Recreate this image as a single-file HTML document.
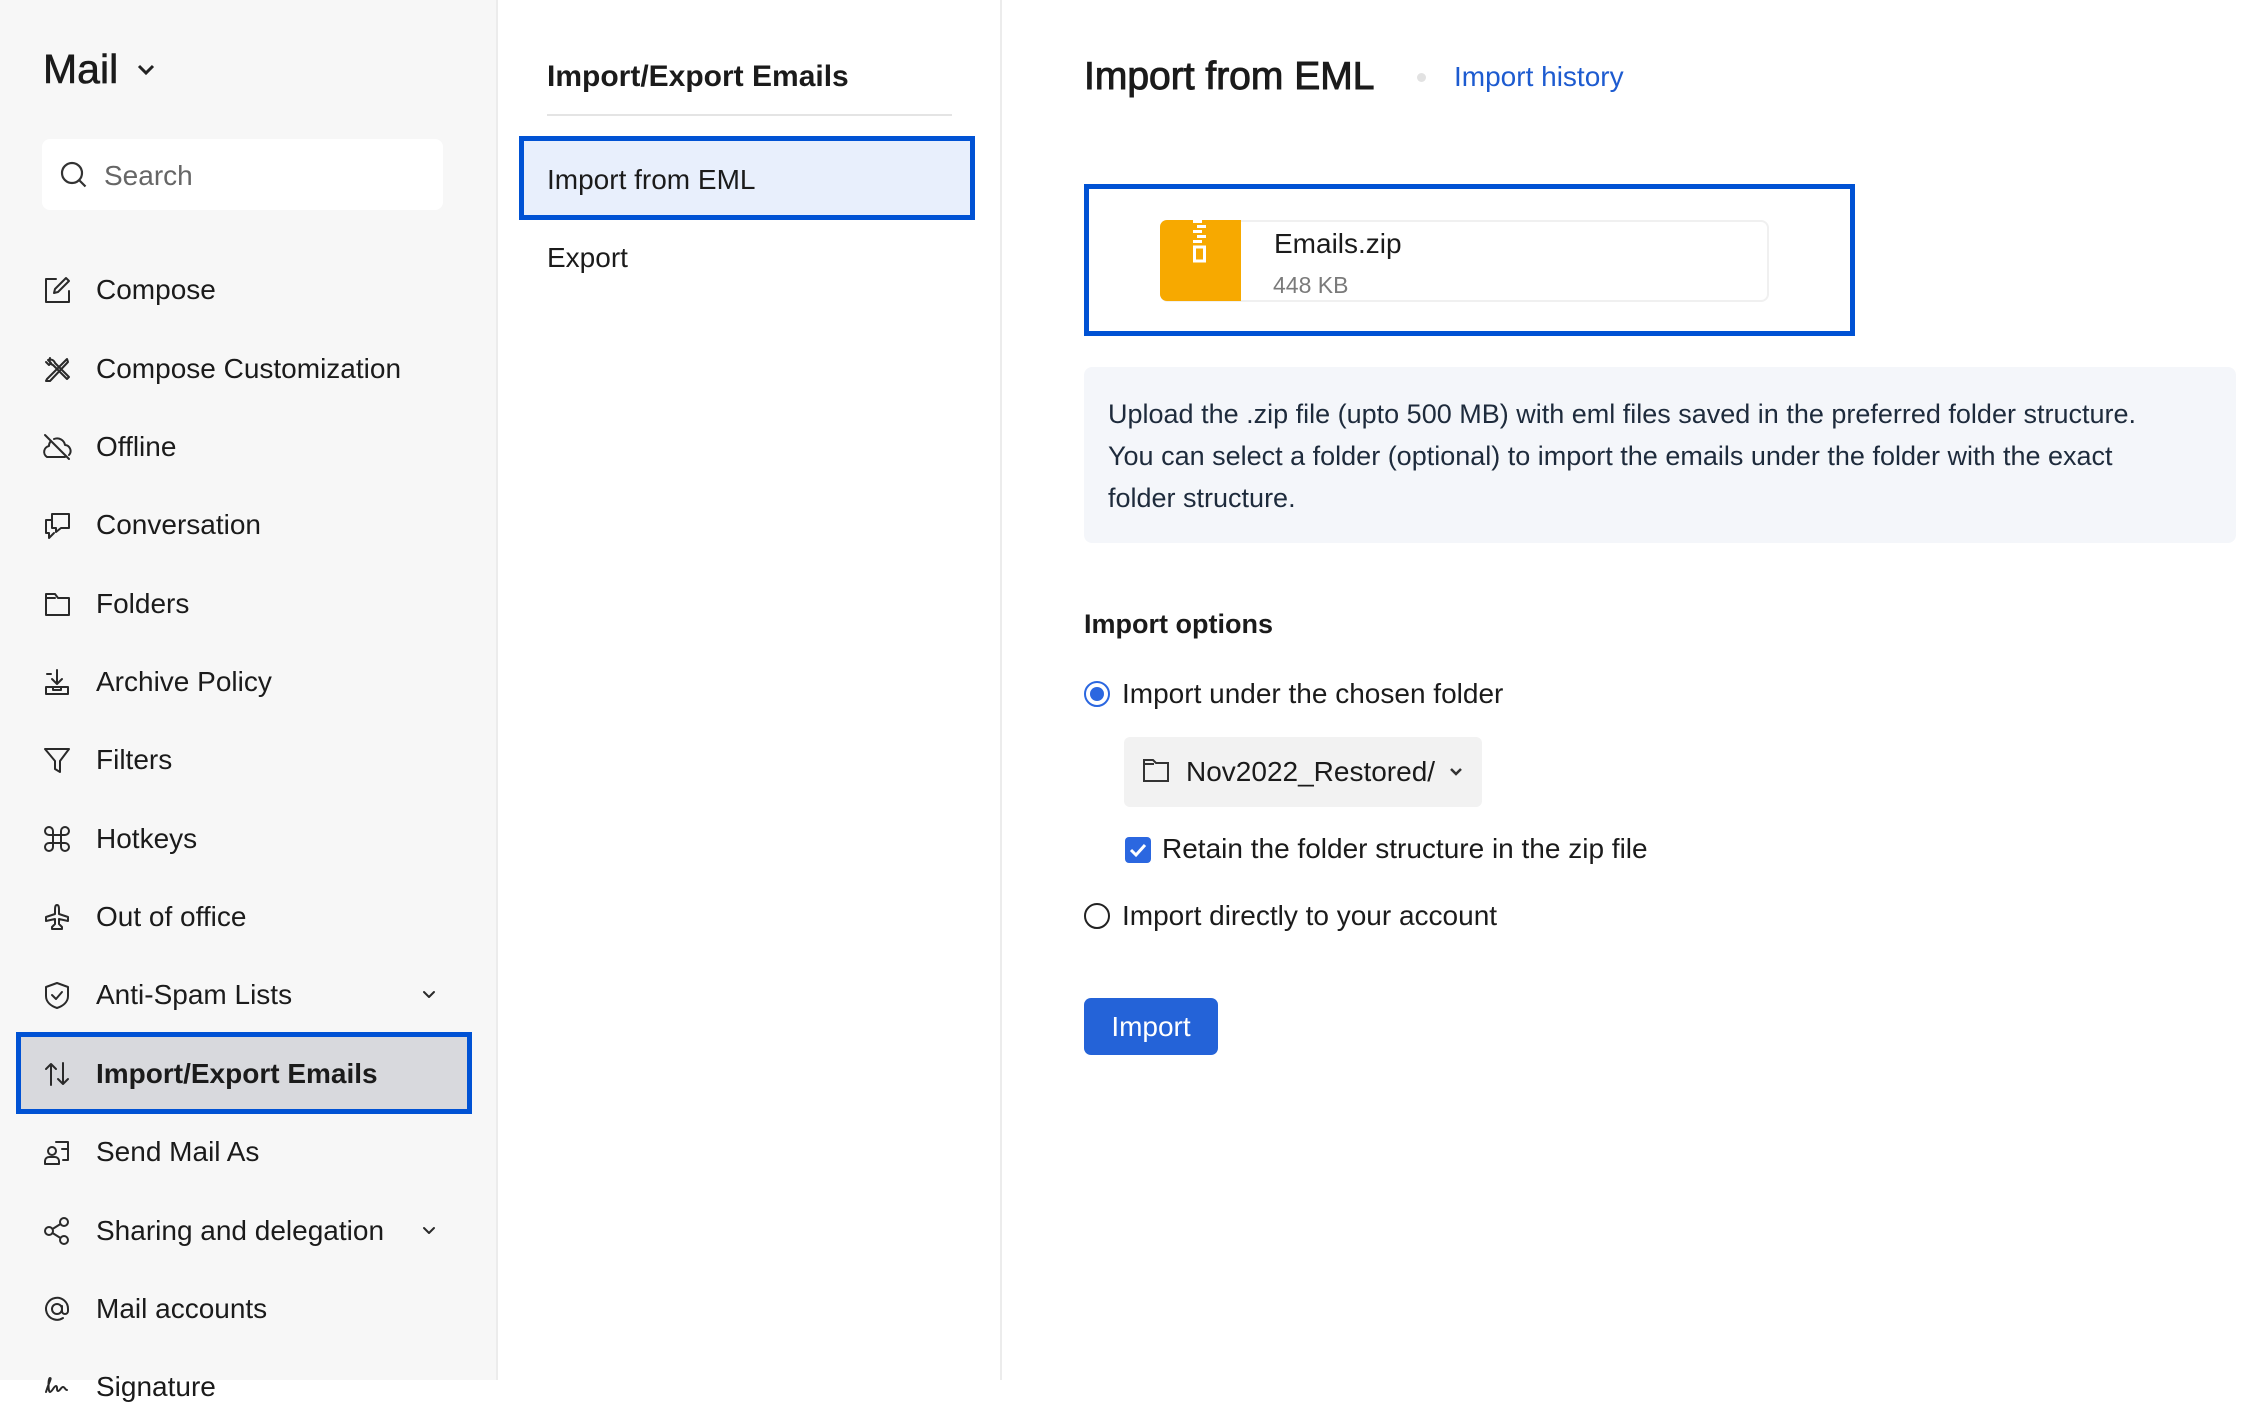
<!DOCTYPE html>
<html><head><meta charset="utf-8"><style>
*{margin:0;padding:0;box-sizing:border-box}
body{width:2264px;height:1380px;overflow:hidden;background:#fff;font-family:"Liberation Sans",sans-serif;color:#1b1b1b;position:relative}
.abs{position:absolute}
#side{left:0;top:0;width:498px;height:1380px;background:#f7f7f7;border-right:2px solid #ececec}
#mid{left:498px;top:0;width:504px;height:1380px;background:#fff;border-right:2px solid #ececec}
.item{position:absolute;left:0;width:498px;height:44px;font-size:28px;line-height:44px}
.item svg{position:absolute;left:42px;top:7px;width:30px;height:30px;fill:none;stroke:#2a2a2a;stroke-width:2;stroke-linecap:round;stroke-linejoin:round}
.item span{position:absolute;left:96px;top:0;white-space:nowrap}
.chev{position:absolute;left:423px;top:12px;width:16px;height:16px}
.t{white-space:nowrap;position:absolute}
</style></head><body>
<div id="side" class="abs"></div>
<div id="mid" class="abs"></div>

<div class="t" style="left:43px;top:45px;font-size:41px;line-height:48px;-webkit-text-stroke:0.6px #1b1b1b">Mail</div>
<svg class="abs" style="left:137px;top:63px" width="18" height="14" viewBox="0 0 18 14"><path d="M2 3l7 7 7-7" fill="none" stroke="#222" stroke-width="3"/></svg>

<div class="abs" style="left:42px;top:139px;width:401px;height:71px;background:#fff;border-radius:8px"></div>
<svg class="abs" style="left:59px;top:160px" width="30" height="30" viewBox="0 0 30 30"><circle cx="13" cy="13" r="10" fill="none" stroke="#333" stroke-width="2.2"/><path d="M20.5 20.5l6 6" stroke="#333" stroke-width="2.2"/></svg>
<div class="t" style="left:104px;top:156px;font-size:28px;line-height:40px;color:#666">Search</div>

<div class="item" style="top:268px"><svg viewBox="0 0 30 30"><path d="M14 4H4v23h23V16"/><path d="M24 3l3 3-11 11-4 1 1-4z"/></svg><span>Compose</span></div>
<div class="item" style="top:347px"><svg viewBox="0 0 30 30"><path d="M5 25L25 5l1 3L8 27l-4 0z"/><path d="M8 4a5 5 0 0 0 3 7l14 14 2-2L13 9a5 5 0 0 0-7-3l3 3-2 2-3-3"/></svg><span>Compose Customization</span></div>
<div class="item" style="top:425px"><svg viewBox="0 0 30 30"><path d="M3 3l24 24"/><path d="M9 9a7 7 0 0 0-2 5 6 6 0 0 0-2 11h18"/><path d="M12 7a8 8 0 0 1 11 6 6 6 0 0 1 4 10"/></svg><span>Offline</span></div>
<div class="item" style="top:503px"><svg viewBox="0 0 30 30"><path d="M10 4h17v14H19l-5 4v-4h-4z"/><path d="M10 10H4v13h3v5l5-5"/></svg><span>Conversation</span></div>
<div class="item" style="top:582px"><svg viewBox="0 0 30 30"><path d="M4 5h9l3 4h11v17H4z"/><path d="M4 9h9"/></svg><span>Folders</span></div>
<div class="item" style="top:660px"><svg viewBox="0 0 30 30"><path d="M15 3v4h0v10M10 12l5 5 5-5"/><path d="M9 7H5v0"/><path d="M4 20h22v7H4z"/><path d="M11 20v3h8v-3"/></svg><span>Archive Policy</span></div>
<div class="item" style="top:738px"><svg viewBox="0 0 30 30"><path d="M3 4h24L18 16v11l-5-3v-8z"/></svg><span>Filters</span></div>
<div class="item" style="top:817px"><svg viewBox="0 0 30 30"><path d="M11 11V7a4 4 0 1 0-4 4h16a4 4 0 1 0-4-4v16a4 4 0 1 0 4-4H7a4 4 0 1 0 4 4z"/></svg><span>Hotkeys</span></div>
<div class="item" style="top:895px"><svg viewBox="0 0 30 30"><path d="M15 3c2 0 2 3 2 5v4l9 3v4l-9-2v5l3 3v2h-10v-2l3-3v-5l-9 2v-4l9-3V8c0-2 0-5 2-5z"/></svg><span>Out of office</span></div>
<div class="item" style="top:973px"><svg viewBox="0 0 30 30"><path d="M15 3l11 4v9c0 6-5 10-11 12C9 26 4 22 4 16V7z"/><path d="M10 15l4 4 6-7"/></svg><span>Anti-Spam Lists</span><svg class="chev" viewBox="0 0 16 16" style="left:421px;top:14px;width:16px;height:16px"><path d="M3 5l5 5 5-5"/></svg></div>
<div class="abs" style="left:16px;top:1032px;width:456px;height:82px;background:#d8d9dd;border:5px solid #0052d4"></div>
<div class="item" style="top:1052px;font-weight:bold"><svg viewBox="0 0 30 30"><path d="M9 26V5M4 10l5-5 5 5M21 4v21M16 20l5 5 5-5"/></svg><span>Import/Export Emails</span></div>
<div class="item" style="top:1130px"><svg viewBox="0 0 30 30"><path d="M14 5h12v18h-5"/><path d="M20 12h6"/><circle cx="10" cy="14" r="4"/><path d="M3 27v-3a4 4 0 0 1 4-4h6a4 4 0 0 1 4 4v3z"/></svg><span>Send Mail As</span></div>
<div class="item" style="top:1209px"><svg viewBox="0 0 30 30"><circle cx="7" cy="15" r="4"/><circle cx="22" cy="6" r="4"/><circle cx="22" cy="24" r="4"/><path d="M10.5 13l8-5M10.5 17l8 5"/></svg><span>Sharing and delegation</span><svg class="chev" viewBox="0 0 16 16" style="left:421px;top:14px;width:16px;height:16px"><path d="M3 5l5 5 5-5"/></svg></div>
<div class="item" style="top:1287px"><svg viewBox="0 0 30 30"><circle cx="15" cy="15" r="5"/><path d="M20 12v5a3 3 0 0 0 6 0v-2a11 11 0 1 0-5 9"/></svg><span>Mail accounts</span></div>
<div class="item" style="top:1365px"><svg viewBox="0 0 30 30"><path d="M4 20c3-10 6-14 4-14s-2 14 0 14 4-6 6-6 0 5 2 5 3-4 5-4 2 3 4 3"/></svg><span>Signature</span></div>

<!-- middle -->
<div class="t" style="left:547px;top:57px;font-size:30px;line-height:40px;font-weight:bold">Import/Export Emails</div>
<div class="abs" style="left:547px;top:114px;width:405px;height:2px;background:#e4e4e4"></div>
<div class="abs" style="left:519px;top:136px;width:456px;height:84px;background:#e8effc;border:5px solid #0052d4"></div>
<div class="t" style="left:547px;top:160px;font-size:28px;line-height:40px">Import from EML</div>
<div class="t" style="left:547px;top:238px;font-size:28px;line-height:40px">Export</div>

<!-- right -->
<div class="t" style="left:1084px;top:53px;font-size:39px;line-height:48px;-webkit-text-stroke:1px #1b1b1b">Import from EML</div>
<div class="abs" style="left:1417px;top:73px;width:9px;height:9px;border-radius:50%;background:#e2e2e2"></div>
<div class="t" style="left:1454px;top:58px;font-size:28px;line-height:38px;color:#1d5bd0">Import history</div>

<div class="abs" style="left:1084px;top:184px;width:771px;height:152px;border:5px solid #0052d4"></div>
<div class="abs" style="left:1160px;top:220px;width:609px;height:82px;border:2px solid #f0f0f0;border-radius:8px;background:#fff"></div>
<div class="abs" style="left:1160px;top:220px;width:81px;height:81px;background:#f7a900;border-radius:7px 0 0 7px"></div>
<svg class="abs" style="left:1190px;top:220px" width="20" height="46" viewBox="0 0 20 46"><g fill="#fff"><rect x="3" y="0" width="9" height="3"/><rect x="7" y="5" width="9" height="3"/><rect x="3" y="10" width="9" height="3"/><rect x="7" y="15" width="9" height="3"/><rect x="3" y="20" width="9" height="3"/></g><rect x="4.5" y="27" width="10" height="14" fill="none" stroke="#fff" stroke-width="3"/></svg>
<div class="t" style="left:1274px;top:226px;font-size:28px;line-height:36px">Emails.zip</div>
<div class="t" style="left:1273px;top:270px;font-size:23px;line-height:30px;color:#7a7a7a">448 KB</div>

<div class="abs" style="left:1084px;top:367px;width:1152px;height:176px;background:#f4f6fa;border-radius:8px"></div>
<div class="abs" style="left:1108px;top:393px;width:1080px;font-size:27px;line-height:42px;color:#1e2b3c">Upload the .zip file (upto 500 MB) with eml files saved in the preferred folder structure.<br>You can select a folder (optional) to import the emails under the folder with the exact<br>folder structure.</div>

<div class="t" style="left:1084px;top:606px;font-size:27px;line-height:36px;font-weight:bold">Import options</div>

<div class="abs" style="left:1084px;top:681px;width:26px;height:26px;border-radius:50%;border:2.5px solid #2b67e0;background:#fff"></div>
<div class="abs" style="left:1090px;top:687px;width:14px;height:14px;border-radius:50%;background:#2b67e0"></div>
<div class="t" style="left:1122px;top:675px;font-size:28px;line-height:38px">Import under the chosen folder</div>

<div class="abs" style="left:1124px;top:737px;width:358px;height:70px;background:#f2f2f2;border-radius:6px"></div>
<svg class="abs" style="left:1142px;top:757px" width="28" height="26" viewBox="0 0 28 26"><path d="M2 3h9l3 3h12v18H2z M2 7h10" fill="none" stroke="#333" stroke-width="2"/></svg>
<div class="t" style="left:1186px;top:753px;font-size:28px;line-height:38px">Nov2022_Restored/</div>
<svg class="abs" style="left:1448px;top:766px" width="16" height="12" viewBox="0 0 16 12"><path d="M3 3l5 5 5-5" fill="none" stroke="#333" stroke-width="2.5"/></svg>

<div class="abs" style="left:1125px;top:837px;width:26px;height:26px;border-radius:4px;background:#2b67e0"></div>
<svg class="abs" style="left:1125px;top:837px" width="26" height="26" viewBox="0 0 26 26"><path d="M6 13l5 5 9-10" fill="none" stroke="#fff" stroke-width="3"/></svg>
<div class="t" style="left:1162px;top:830px;font-size:28px;line-height:38px">Retain the folder structure in the zip file</div>

<div class="abs" style="left:1084px;top:903px;width:26px;height:26px;border-radius:50%;border:2.5px solid #222;background:#fff"></div>
<div class="t" style="left:1122px;top:897px;font-size:28px;line-height:38px">Import directly to your account</div>

<div class="abs" style="left:1084px;top:998px;width:134px;height:57px;background:#2463d8;border-radius:7px;color:#fff;font-size:28px;line-height:57px;text-align:center">Import</div>
</body></html>
